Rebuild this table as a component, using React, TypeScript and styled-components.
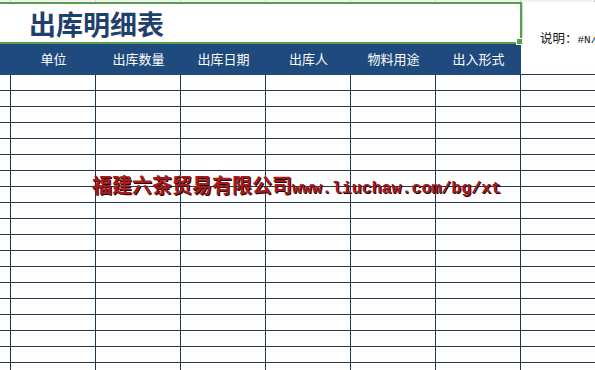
import React from 'react'
import styled, { createGlobalStyle } from 'styled-components'

const GlobalStyle = createGlobalStyle`
    html, body {
        margin: 0;
        padding: 0;
        background: #ffffff;
    }
`

const GRID = '#1f3750'
const GREEN = '#55a04a'
const COLS = '11px repeat(6, 85px) 1fr'

const Sheet = styled.div`
    position: relative;
    width: 595px;
    height: 370px;
    overflow: hidden;
    background: #ffffff;
    font-family: 'Noto Sans CJK SC', 'Noto Sans', sans-serif;
`

const TopStrip = styled.div`
    display: grid;
    grid-template-columns: ${COLS};
    height: 2px;
    background: #f3f3f3;
`

const TopCell = styled.div`
    border-right: 1px solid #cfcfcf;
`

const TitleRow = styled.div`
    display: flex;
    height: 42px;
`

const TitleBox = styled.div`
    position: relative;
    box-sizing: border-box;
    width: 522px;
    display: flex;
    align-items: center;
    padding-left: 29px;
    border: 2px solid ${GREEN};
    border-left: none;
`

const Title = styled.h1`
    margin: 0;
    font-size: 27px;
    line-height: 1;
    font-weight: 700;
    color: #1f406c;
`

const FillHandle = styled.span`
    position: absolute;
    right: -3px;
    bottom: -3px;
    width: 5px;
    height: 5px;
    background: ${GREEN};
    border: 1px solid #ffffff;
`

const Note = styled.div`
    flex: 1;
    box-sizing: border-box;
    border-left: 1px solid #dadada;
    padding: 29px 0 0 17px;
    white-space: nowrap;
    overflow: hidden;
    font-size: 12.5px;
    line-height: 14px;
    color: #111111;
`

const Mono = styled.span<{ size: number }>`
    font-family: 'Liberation Mono', monospace;
    font-size: ${({ size }) => size}px;
`

const Row = styled.div<{ h: number }>`
    display: grid;
    grid-template-columns: ${COLS};
    height: ${({ h }) => h}px;
`

const HeadCell = styled.div<{ blank?: boolean }>`
    display: flex;
    align-items: center;
    justify-content: center;
    box-sizing: border-box;
    background: ${({ blank }) => (blank ? '#ffffff' : '#1f4a7d')};
    border-bottom: ${({ blank }) => (blank ? `1px solid ${GRID}` : 'none')};
    color: #ffffff;
    font-size: 13px;
    padding-bottom: 3px;
`

const Cell = styled.div<{ last?: boolean }>`
    box-sizing: border-box;
    border-bottom: 1px solid ${GRID};
    border-right: ${({ last }) => (last ? 'none' : `1px solid ${GRID}`)};
`

const Watermark = styled.div`
    position: absolute;
    left: 92px;
    top: 173px;
    white-space: nowrap;
    line-height: 24px;
    color: #a81a1a;
    text-shadow: 1px 1px 0 #200000;
    pointer-events: none;
`

const WaterCn = styled.span`
    font-family: 'Noto Sans CJK SC', sans-serif;
    font-size: 20px;
    font-weight: 700;
`

const WaterEn = styled.span`
    font-family: 'Liberation Mono', monospace;
    font-size: 16.6px;
    font-weight: 700;
`

const headers = ['', '单位', '出库数量', '出库日期', '出库人', '物料用途', '出入形式']
const bodyRows = Array.from({ length: 19 }, (_, i) => i)

export default function App() {
    return (
        <>
            <GlobalStyle />
            <Sheet>
                <TopStrip>
                    {Array.from({ length: 8 }, (_, i) => (
                        <TopCell key={i} />
                    ))}
                </TopStrip>
                <TitleRow>
                    <TitleBox>
                        <Title>出库明细表</Title>
                        <FillHandle />
                    </TitleBox>
                    <Note>
                        说明：<Mono size={11}>#N/A</Mono>
                    </Note>
                </TitleRow>
                <Row h={31}>
                    {headers.map((h, i) => (
                        <HeadCell key={i}>{h}</HeadCell>
                    ))}
                    <HeadCell blank />
                </Row>
                {bodyRows.map((r) => (
                    <Row key={r} h={16}>
                        {Array.from({ length: 8 }, (_, c) => (
                            <Cell key={c} last={c === 7} />
                        ))}
                    </Row>
                ))}
                <Watermark>
                    <WaterCn>福建六茶贸易有限公司</WaterCn>
                    <WaterEn>www.liuchaw.com/bg/xt</WaterEn>
                </Watermark>
            </Sheet>
        </>
    )
}
